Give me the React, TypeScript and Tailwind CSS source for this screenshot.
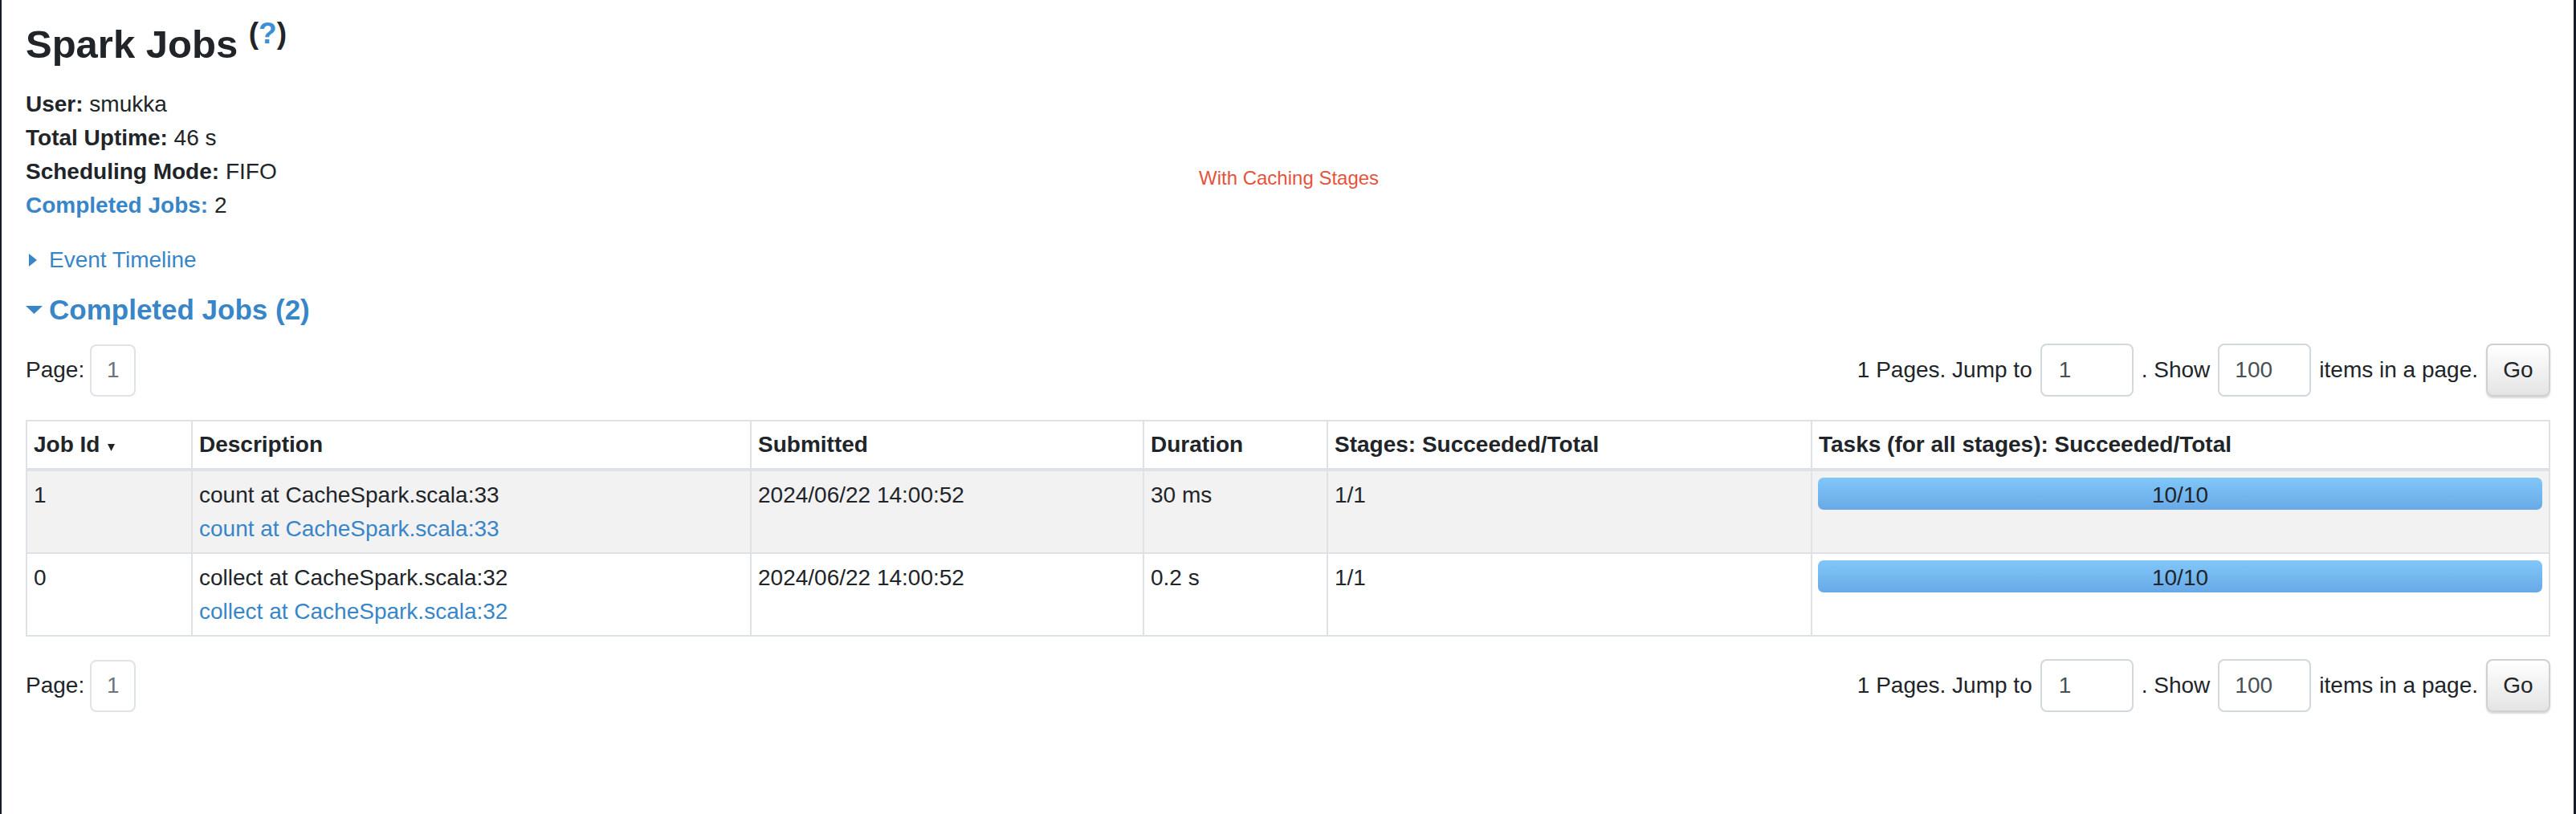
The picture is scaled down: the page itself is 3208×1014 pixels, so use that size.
import React from 'react';

type Job = {
	id: string,
	name: string,
	submitted: string,
	duration: string,
	stages: string,
	tasks: string,
}

const jobs: Job[] = [
	{ id: '1', name: 'count at CacheSpark.scala:33', submitted: '2024/06/22 14:00:52', duration: '30 ms', stages: '1/1', tasks: '10/10' },
	{ id: '0', name: 'collect at CacheSpark.scala:32', submitted: '2024/06/22 14:00:52', duration: '0.2 s', stages: '1/1', tasks: '10/10' },
];

const cols = 'grid grid-cols-[206px_696px_489px_229px_603px_1fr]';

const Pager = () => (
	<div className="flex items-center justify-between">
		<div className="flex items-center">
			<span>Page:</span>
			<div className="ml-[7px] flex h-[65px] w-[57px] items-center justify-center rounded-[8px] border-2 border-[#dfe3e8] text-[#6c757d]">1</div>
		</div>
		<div className="flex items-center gap-[10px]">
			<span>1 Pages. Jump to</span>
			<div className="flex h-[66px] w-[116px] items-center rounded-[8px] border-2 border-[#d3d8de] pl-[21px] text-[#495057]">1</div>
			<span>. Show</span>
			<div className="flex h-[66px] w-[116px] items-center rounded-[8px] border-2 border-[#d3d8de] pl-[19px] text-[#495057]">100</div>
			<span>items in a page.</span>
			<div className="flex h-[66px] w-[80px] items-center justify-center rounded-[8px] border-2 border-[#d0d0d0] bg-gradient-to-b from-white to-[#e4e4e4] shadow-[0_2px_2px_rgba(0,0,0,0.15)]">Go</div>
		</div>
	</div>
);

export default function App() {
	return (
		<div className="relative h-[1014px] overflow-hidden border-l-2 border-r-[3px] border-[#151b27] bg-white pl-[30px] pr-[29px] pt-[26px] font-['Liberation_Sans',Arial,sans-serif] text-[28px] leading-[42px] text-[#212529]">
			{/* annotation */}
			<div className="absolute left-[1491px] top-[210px] text-[24px] leading-[24px] text-[#e5533d]">With Caching Stages</div>

			<h3 className="text-[49px] font-bold leading-[59px]">
				Spark Jobs <span className="relative bottom-[18px] text-[37px]">(<span className="text-[#3f8fd6]">?</span>)</span>
			</h3>

			<div className="mt-[20px]">
				<div><strong>User:</strong> smukka</div>
				<div><strong>Total Uptime:</strong> 46 s</div>
				<div><strong>Scheduling Mode:</strong> FIFO</div>
				<div><strong className="text-[#3886c8]">Completed Jobs:</strong> 2</div>
			</div>

			<div className="mt-[26px] flex items-center text-[#3886c8]">
				<svg width="10" height="16" viewBox="0 0 10 16" className="ml-[4px]"><polygon points="0,0 10,8 0,16" fill="#3886c8" /></svg>
				<span className="ml-[15px]">Event Timeline</span>
			</div>

			<div className="mt-[20px] flex items-center text-[35px] font-bold leading-[42px] text-[#3886c8]">
				<svg width="21" height="10" viewBox="0 0 21 10"><polygon points="0,0 21,0 10.5,10" fill="#3886c8" /></svg>
				<span className="ml-[8px]">Completed Jobs (2)</span>
			</div>

			<div className="mt-[21px]">
				<Pager />
			</div>

			<div className="mt-[29px] border-2 border-[#dee2e6]">
				<div className={`${cols} border-b-4 border-[#dee2e6] font-bold`}>
					<div className="flex items-center border-r-2 border-[#dee2e6] px-[8px] py-[8px]">
						Job Id
						<svg width="9" height="9" viewBox="0 0 9 9" className="ml-[10px] mt-[6px]"><polygon points="0,0 9,0 4.5,9" fill="#212529" /></svg>
					</div>
					<div className="border-r-2 border-[#dee2e6] px-[8px] py-[8px]">Description</div>
					<div className="border-r-2 border-[#dee2e6] px-[8px] py-[8px]">Submitted</div>
					<div className="border-r-2 border-[#dee2e6] px-[8px] py-[8px]">Duration</div>
					<div className="border-r-2 border-[#dee2e6] px-[8px] py-[8px]">Stages: Succeeded/Total</div>
					<div className="px-[8px] py-[8px]">Tasks (for all stages): Succeeded/Total</div>
				</div>
				{jobs.map((job, i) => (
					<div key={job.id} className={`${cols} ${i === 0 ? 'border-b-2 border-[#dee2e6] bg-[#f2f2f2]' : 'bg-white'}`}>
						<div className="border-r-2 border-[#dee2e6] px-[8px] pb-[8px] pt-[9px]">{job.id}</div>
						<div className="border-r-2 border-[#dee2e6] px-[8px] pb-[8px] pt-[9px]">
							<div>{job.name}</div>
							<div className="text-[#3886c8]">{job.name}</div>
						</div>
						<div className="border-r-2 border-[#dee2e6] px-[8px] pb-[8px] pt-[9px]">{job.submitted}</div>
						<div className="border-r-2 border-[#dee2e6] px-[8px] pb-[8px] pt-[9px]">{job.duration}</div>
						<div className="border-r-2 border-[#dee2e6] px-[8px] pb-[8px] pt-[9px]">{job.stages}</div>
						<div className="pb-[8px] pl-[7px] pr-[8px] pt-[8px]">
							<div className="flex h-[40px] items-center justify-center rounded-[7px] bg-gradient-to-b from-[#80c7f9] to-[#68a9e7] pt-[3px] leading-[37px]">{job.tasks}</div>
						</div>
					</div>
				))}
			</div>

			<div className="mt-[28px]">
				<Pager />
			</div>
		</div>
	);
}
